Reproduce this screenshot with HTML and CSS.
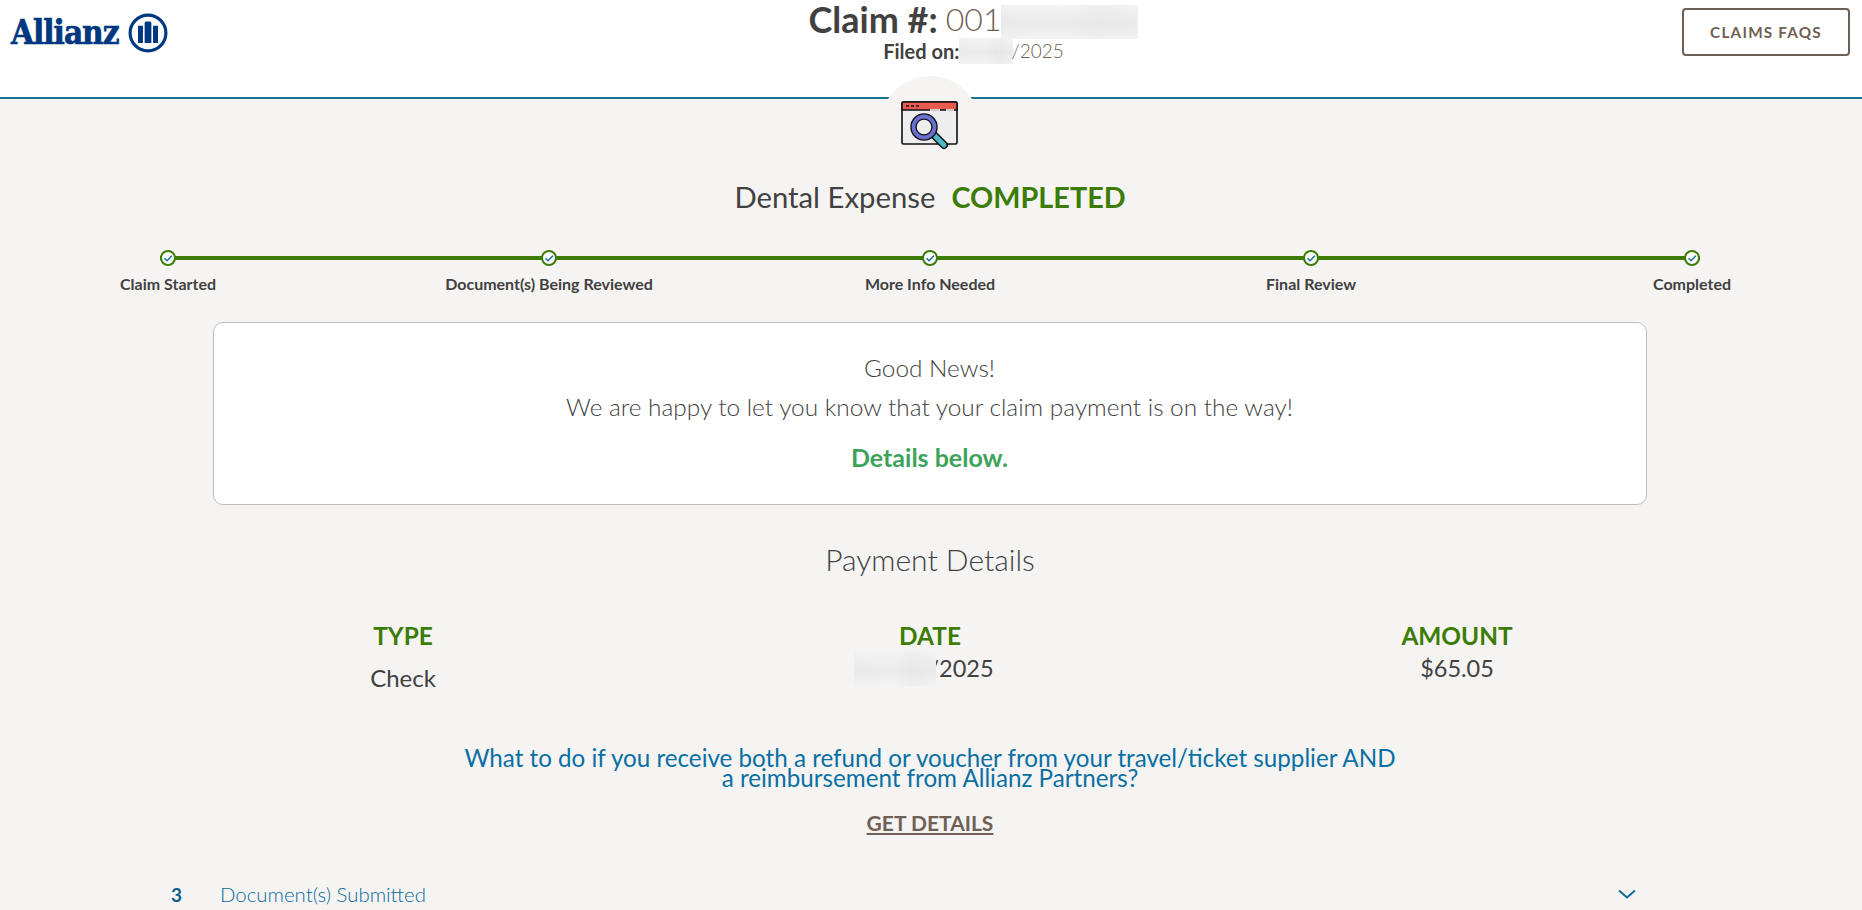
FILE: index.html
```html
<!DOCTYPE html>
<html lang="en">
<head>
<meta charset="utf-8">
<title>Claim Status</title>
<link rel="stylesheet" href="styles.css">
</head>
<body>
<header class="topbar">
  <div class="brand">
    <span class="brand-name">Allianz</span>
    <svg class="brand-mark" viewBox="0 0 38 38" aria-hidden="true">
      <circle cx="19" cy="19" r="17" fill="none" stroke="#003781" stroke-width="3"/>
      <path d="M9.500 12h4.700v16.500H9.500zM15.800 9.500c0-1 .5-1.500 1.500-1.500h3.400c1 0 1.500.5 1.500 1.500v19h-6.400zM23.800 12h4.700v16.500h-4.700z" fill="#003781"/>
    </svg>
  </div>
  <div class="claim-head">
    <h1 class="claim-no"><b>Claim #:</b> <span class="claim-id">001</span><span class="mask mask-id"></span></h1>
    <p class="filed"><b>Filed on:</b><span class="mask mask-filed"></span><span class="filed-year">/2025</span></p>
  </div>
  <a class="faq-btn" href="#">CLAIMS FAQS</a>
</header>

<main class="content">
  <div class="badge">
    <svg class="badge-icon" viewBox="0 0 58 50" aria-hidden="true">
      <rect x="1" y="1" width="55" height="42" rx="1.500" fill="#eeeeee" stroke="#111" stroke-width="1.600"/>
      <path d="M1 9V2.500C1 1.700 1.700 1 2.500 1h52c.8 0 1.500.7 1.500 1.500V9z" fill="#e85c50" stroke="#111" stroke-width="1.600"/>
      <path d="M5 5h3M10 5h3M15 5h3" stroke="#111" stroke-width="1.400"/>
      <path d="M29 9h7M35 9h4M45 9h8" stroke="#fff" stroke-width="1.600"/>
      <path d="M33 34l10 10" stroke="#111" stroke-width="8" stroke-linecap="round"/>
      <path d="M33 34l10 10" stroke="#4db8c8" stroke-width="5" stroke-linecap="round"/>
      <circle cx="23" cy="26" r="10.500" fill="#eeeeee" stroke="#111" stroke-width="6.500"/>
      <circle cx="23" cy="26" r="10.500" fill="none" stroke="#6b6fd4" stroke-width="3.800"/>
    </svg>
  </div>

  <h2 class="status"><span class="status-type">Dental Expense</span><span class="status-state">COMPLETED</span></h2>

  <ol class="stepper">
    <li class="step"><span class="dot"><svg viewBox="0 0 12 12"><path d="M2.500 6.300l2.500 2.400 4.900-5" fill="none" stroke="#1c6f9c" stroke-width="1.500"/></svg></span><span class="step-label">Claim Started</span></li>
    <li class="step"><span class="dot"><svg viewBox="0 0 12 12"><path d="M2.500 6.300l2.500 2.400 4.900-5" fill="none" stroke="#1c6f9c" stroke-width="1.500"/></svg></span><span class="step-label">Document(s) Being Reviewed</span></li>
    <li class="step"><span class="dot"><svg viewBox="0 0 12 12"><path d="M2.500 6.300l2.500 2.400 4.900-5" fill="none" stroke="#1c6f9c" stroke-width="1.500"/></svg></span><span class="step-label">More Info Needed</span></li>
    <li class="step"><span class="dot"><svg viewBox="0 0 12 12"><path d="M2.500 6.300l2.500 2.400 4.900-5" fill="none" stroke="#1c6f9c" stroke-width="1.500"/></svg></span><span class="step-label">Final Review</span></li>
    <li class="step"><span class="dot"><svg viewBox="0 0 12 12"><path d="M2.500 6.300l2.500 2.400 4.900-5" fill="none" stroke="#1c6f9c" stroke-width="1.500"/></svg></span><span class="step-label">Completed</span></li>
  </ol>

  <section class="notice">
    <p class="notice-line">Good News!</p>
    <p class="notice-line">We are happy to let you know that your claim payment is on the way!</p>
    <p class="notice-strong">Details below.</p>
  </section>

  <h3 class="pay-title">Payment Details</h3>
  <div class="pay-grid">
    <div class="pay-col"><span class="pay-head">TYPE</span><span class="pay-val pay-val-low">Check</span></div>
    <div class="pay-col"><span class="pay-head">DATE</span><span class="pay-val pay-val-mid"><span class="mask mask-date"></span>/2025</span></div>
    <div class="pay-col"><span class="pay-head">AMOUNT</span><span class="pay-val pay-val-mid">$65.05</span></div>
  </div>

  <p class="refund">What to do if you receive both a refund or voucher from your travel/ticket supplier AND a reimbursement from Allianz Partners?</p>
  <a class="details-link" href="#">GET DETAILS</a>

  <div class="accordion">
    <span class="acc-count">3</span>
    <span class="acc-title">Document(s) Submitted</span>
    <svg class="acc-chevron" viewBox="0 0 18 10" aria-hidden="true"><path d="M1 1.500l8 7 8-7" fill="none" stroke="#0f6a96" stroke-width="2"/></svg>
  </div>
</main>
</body>
</html>
```
FILE: styles.css
```css
* { box-sizing: border-box; }
html, body { margin: 0; padding: 0; }
body {
  background: #f5f4f3;
  color: #414141;
  font-family: Lato, "Open Sans", sans-serif;
  overflow: hidden;
  height: 910px;
}
h1, h2, h3, p, ol { margin: 0; padding: 0; font-weight: 400; }
a { color: inherit; }

.topbar {
  height: 99px;
  background: #fff;
  border-bottom: 2px solid #1c7391;
  display: grid;
  grid-template-columns: 1fr auto 1fr;
  align-items: start;
  padding: 0 12px 0 11px;
}
.brand { display: flex; align-items: center; gap: 9px; padding-top: 13px; }
.brand-name {
  font-family: "DejaVu Serif", serif;
  font-stretch: condensed;
  font-weight: 700;
  font-size: 33px;
  line-height: 38px;
  letter-spacing: -1px;
  -webkit-text-stroke: 0.7px #003781;
  color: #003781;
}
.brand-mark { width: 40px; height: 40px; }
.claim-head { text-align: center; margin-left: 86px; }
.claim-no { font-size: 32px; line-height: 38px; color: #414141; display: flex; align-items: flex-start; justify-content: center; gap: 8px; }
.claim-no b { font-weight: 700; font-size: 36px; }
.claim-id { font-weight: 300; color: #6f5f55; }
.claim-no .mask-id { margin: 5px 0 0 -8px; }
.mask {
  display: inline-block;
  background:
    linear-gradient(180deg, rgba(255, 255, 255, .2), rgba(215, 215, 215, .25) 55%, rgba(255, 255, 255, .15)),
    linear-gradient(90deg, #efefef, #f2f2f2 45%, #ececec 70%, #f0f0f0);
}
.mask-id { width: 137px; height: 34px; }
.filed { display: flex; justify-content: center; font-size: 19px; line-height: 26px; margin-top: -1px; }
.filed b { font-weight: 700; font-size: 20px; }
.filed-year { font-weight: 300; color: #6f5f55; margin-left: -2px; }
.mask-filed { width: 54px; height: 26px; }
.faq-btn {
  justify-self: end;
  margin-top: 8px;
  width: 168px;
  height: 48px;
  border: 2px solid #6f5f55;
  border-radius: 4px;
  display: flex;
  align-items: center;
  justify-content: center;
  font-weight: 700;
  font-size: 15.300px;
  letter-spacing: 1.2px;
  text-decoration: none;
  color: #6f5f55;
}

.content { display: flex; flex-direction: column; align-items: center; position: relative; padding-right: 2px; }
.badge {
  position: absolute;
  top: -23px;
  left: 880px;
  width: 100px;
  height: 100px;
  border-radius: 50%;
  background: #f5f4f3;
  display: flex;
  align-items: flex-start;
  justify-content: center;
  padding-top: 25px;
}
.badge-icon { width: 58px; height: 50px; }
.status { margin-top: 80px; font-size: 29.300px; line-height: 36px; display: flex; gap: 16px; align-items: baseline; }
.status-type { font-weight: 400; }
.status-state { font-weight: 700; color: #3c7c05; font-size: 28.800px; }

.stepper {
  list-style: none;
  width: 1540px;
  margin-top: 35px;
  display: flex;
  justify-content: space-between;
  background: linear-gradient(#3c7c05, #3c7c05) 0 6px / 100% 4px no-repeat;
}
.step { width: 16px; display: flex; flex-direction: column; align-items: center; }
.dot { width: 16px; height: 16px; border-radius: 50%; border: 2px solid #3c7c05; background: #fff; display: block; }
.dot svg { display: block; width: 12px; height: 12px; }
.step-label { margin-top: 8px; font-size: 16px; line-height: 20px; font-weight: 700; white-space: nowrap; }

.notice {
  width: 1434px;
  height: 183px;
  margin: 28px 1px 0 0;
  background: #fff;
  border: 1px solid #bdbdbd;
  border-radius: 10px;
  text-align: center;
  padding-top: 25px;
}
.notice-line { font-size: 24.400px; line-height: 39px; font-weight: 300; }
.notice-strong { font-size: 25px; line-height: 30px; font-weight: 700; color: #3da35a; margin-top: 16px; }

.pay-title { margin-top: 36px; font-size: 30px; line-height: 36px; font-weight: 300; }
.pay-grid { width: 1581px; margin-top: 44px; display: grid; grid-template-columns: repeat(3, 1fr); text-align: center; }
.pay-col { display: flex; flex-direction: column; align-items: center; }
.pay-head { font-size: 24.400px; line-height: 30px; font-weight: 700; color: #3c7c05; }
.pay-val { font-size: 23.500px; line-height: 28px; display: flex; align-items: flex-start; }
.pay-val-low { margin-top: 13px; font-size: 24px; }
.pay-val-mid { margin-top: 3px; }
.mask-date { width: 82px; height: 35px; margin: -3px -8px 0 -12px; position: relative; }

.refund { width: 940px; margin-top: 56px; text-align: center; font-size: 24.200px; line-height: 20px; color: #0a6fa3; }
.details-link { margin-top: 22px; font-size: 21px; line-height: 26px; font-weight: 700; color: #6f5f55; }

.accordion { width: 1524px; margin-top: 45px; display: flex; align-items: center; height: 26px; color: #0a6a9c; }
.acc-count { width: 52px; padding-left: 3px; font-weight: 700; font-size: 19px; color: #0f5f8c; }
.acc-title { flex: 1; font-size: 20.400px; font-weight: 300; }
.acc-chevron { width: 18px; height: 10px; margin-right: 56px; }
```
